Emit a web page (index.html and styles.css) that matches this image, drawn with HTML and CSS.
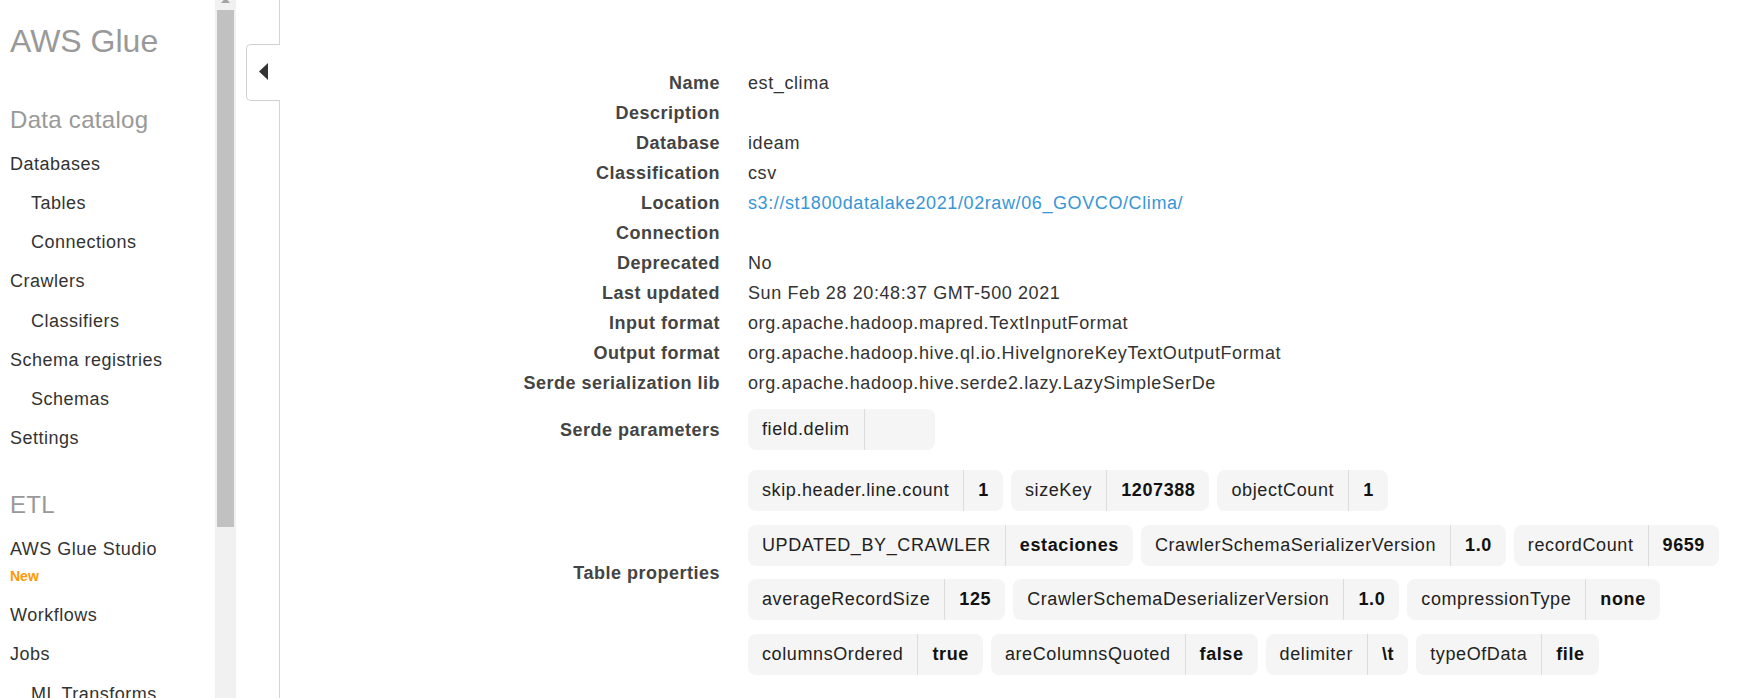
FILE: index.html
```html
<!DOCTYPE html>
<html lang="en">
<head>
<meta charset="utf-8">
<title>AWS Glue - est_clima</title>
<link rel="stylesheet" href="styles.css">
</head>
<body>
<div class="app">
  <aside class="sidebar">
    <nav class="nav">
      <div class="brand">AWS Glue</div>
      <div class="section-title">Data catalog</div>
      <a class="item">Databases</a>
      <a class="item sub">Tables</a>
      <a class="item sub">Connections</a>
      <a class="item">Crawlers</a>
      <a class="item sub">Classifiers</a>
      <a class="item">Schema registries</a>
      <a class="item sub">Schemas</a>
      <a class="item">Settings</a>
      <div class="section-title etl">ETL</div>
      <a class="item studio">AWS Glue Studio<span class="new">New</span></a>
      <a class="item">Workflows</a>
      <a class="item">Jobs</a>
      <a class="item sub">ML Transforms</a>
    </nav>
    <div class="scrollbar">
      <svg class="scroll-arrow" width="17" height="10" viewBox="0 0 17 10"><polygon points="4,3 13,3 8.5,-2" fill="#a3a3a3"/></svg>
      <div class="thumb"></div>
    </div>
    <div class="spacer"></div>
  </aside>
  <main class="main">
    <div class="collapse-tab">
      <svg width="9" height="17" viewBox="0 0 9 17"><polygon points="9,0 9,17 0,8.5" fill="#333"/></svg>
    </div>
    <div class="props">
      <div class="row"><div class="label">Name</div><div class="value">est_clima</div></div>
      <div class="row"><div class="label">Description</div><div class="value"></div></div>
      <div class="row"><div class="label">Database</div><div class="value">ideam</div></div>
      <div class="row"><div class="label">Classification</div><div class="value">csv</div></div>
      <div class="row"><div class="label">Location</div><div class="value"><a class="link">s3://st1800datalake2021/02raw/06_GOVCO/Clima/</a></div></div>
      <div class="row"><div class="label">Connection</div><div class="value"></div></div>
      <div class="row"><div class="label">Deprecated</div><div class="value">No</div></div>
      <div class="row"><div class="label">Last updated</div><div class="value">Sun Feb 28 20:48:37 GMT-500 2021</div></div>
      <div class="row"><div class="label">Input format</div><div class="value">org.apache.hadoop.mapred.TextInputFormat</div></div>
      <div class="row"><div class="label">Output format</div><div class="value">org.apache.hadoop.hive.ql.io.HiveIgnoreKeyTextOutputFormat</div></div>
      <div class="row"><div class="label">Serde serialization lib</div><div class="value">org.apache.hadoop.hive.serde2.lazy.LazySimpleSerDe</div></div>

      <div class="row tags-row serde">
        <div class="label">Serde parameters</div>
        <div class="tags">
          <div class="tag-line">
            <span class="tag"><span class="k">field.delim</span><span class="v empty"></span></span>
          </div>
        </div>
      </div>

      <div class="row tags-row table-props">
        <div class="label">Table properties</div>
        <div class="tags">
          <div class="tag-line">
            <span class="tag"><span class="k">skip.header.line.count</span><span class="v">1</span></span>
            <span class="tag"><span class="k">sizeKey</span><span class="v">1207388</span></span>
            <span class="tag"><span class="k">objectCount</span><span class="v">1</span></span>
          </div>
          <div class="tag-line">
            <span class="tag"><span class="k">UPDATED_BY_CRAWLER</span><span class="v">estaciones</span></span>
            <span class="tag"><span class="k">CrawlerSchemaSerializerVersion</span><span class="v">1.0</span></span>
            <span class="tag"><span class="k">recordCount</span><span class="v">9659</span></span>
          </div>
          <div class="tag-line">
            <span class="tag"><span class="k">averageRecordSize</span><span class="v">125</span></span>
            <span class="tag"><span class="k">CrawlerSchemaDeserializerVersion</span><span class="v">1.0</span></span>
            <span class="tag"><span class="k">compressionType</span><span class="v">none</span></span>
          </div>
          <div class="tag-line">
            <span class="tag"><span class="k">columnsOrdered</span><span class="v">true</span></span>
            <span class="tag"><span class="k">areColumnsQuoted</span><span class="v">false</span></span>
            <span class="tag"><span class="k">delimiter</span><span class="v">\t</span></span>
            <span class="tag"><span class="k">typeOfData</span><span class="v">file</span></span>
          </div>
        </div>
      </div>
    </div>
  </main>
</div>
</body>
</html>
```

FILE: styles.css
```css
* { box-sizing: border-box; }

html, body {
  margin: 0;
  padding: 0;
  width: 1740px;
  height: 698px;
  overflow: hidden;
  background: #fff;
}

body {
  font-family: "Liberation Sans", Arial, sans-serif;
  font-size: 18px;
  letter-spacing: 0.5px;
  color: #333;
}

.app {
  display: flex;
  height: 698px;
}

/* ---------- sidebar ---------- */
.sidebar {
  display: flex;
  flex: 0 0 279px;
  height: 698px;
}

.nav {
  flex: 0 0 215px;
  padding-left: 10px;
  display: flex;
  flex-direction: column;
  overflow: hidden;
}

.brand {
  margin-top: 21px;
  height: 40px;
  line-height: 40px;
  font-size: 32px;
  letter-spacing: 0;
  color: #999;
  white-space: nowrap;
}

.section-title {
  margin-top: 43.7px;
  margin-bottom: 10px;
  height: 30px;
  line-height: 30px;
  font-size: 24px;
  letter-spacing: 0.3px;
  color: #999;
}

.section-title.etl {
  margin-top: 31.4px;
}

.item {
  display: block;
  height: 39.25px;
  line-height: 39.25px;
  color: #333;
  white-space: nowrap;
  flex: 0 0 auto;
}

.item.sub {
  padding-left: 21px;
}

.item.studio {
  height: 66px;
}

.new {
  display: block;
  height: 16px;
  line-height: 16px;
  margin-top: -1.4px;
  font-size: 14px;
  font-weight: bold;
  letter-spacing: 0;
  color: #ff9900;
}

.scrollbar {
  flex: 0 0 21px;
  background: #f1f1f1;
  display: flex;
  flex-direction: column;
}

.scroll-arrow {
  display: block;
  margin-left: 2px;
}

.thumb {
  margin-left: 2px;
  width: 17px;
  height: 517px;
  background: #c1c1c1;
}

.spacer {
  flex: 0 0 43px;
}

/* ---------- main ---------- */
.main {
  position: relative;
  flex: 1;
  border-left: 1px solid #d5d5d5;
  padding-top: 68px;
  padding-left: 200px;
  letter-spacing: 0.6px;
}

.collapse-tab {
  position: absolute;
  left: -34px;
  top: 44px;
  width: 34px;
  height: 57px;
  background: #fff;
  border: 1px solid #d0d0d0;
  border-right: none;
  border-radius: 5px 0 0 5px;
  padding: 18px 0 0 12px;
}

.collapse-tab svg { display: block; }

.row {
  display: grid;
  grid-template-columns: 240px 1fr;
  column-gap: 28px;
  align-items: center;
  height: 30px;
}

.label {
  text-align: right;
  font-weight: bold;
  color: #444;
  white-space: nowrap;
  line-height: 30px;
  letter-spacing: 0.5px;
}

.value {
  color: #333;
  white-space: nowrap;
  line-height: 30px;
}

.link {
  color: #3796d6;
  text-decoration: none;
}

.tags-row {
  height: auto;
}

.tags-row.serde {
  margin-top: 11px;
}

.tags-row.table-props {
  margin-top: 20px;
}

.tags {
  display: flex;
  flex-direction: column;
  gap: 13.7px;
}

.tag-line {
  display: flex;
  gap: 8px;
}

.tag {
  display: inline-flex;
  align-items: stretch;
  height: 41px;
  background: #f5f5f5;
  border-radius: 8px;
  color: #222;
  white-space: nowrap;
}

.tag .k,
.tag .v {
  display: flex;
  align-items: center;
  padding: 0 14px;
}

.tag .v {
  border-left: 1px solid #dcdcdc;
  font-weight: bold;
  color: #111;
}

.tag .v.empty {
  width: 71px;
}
```
